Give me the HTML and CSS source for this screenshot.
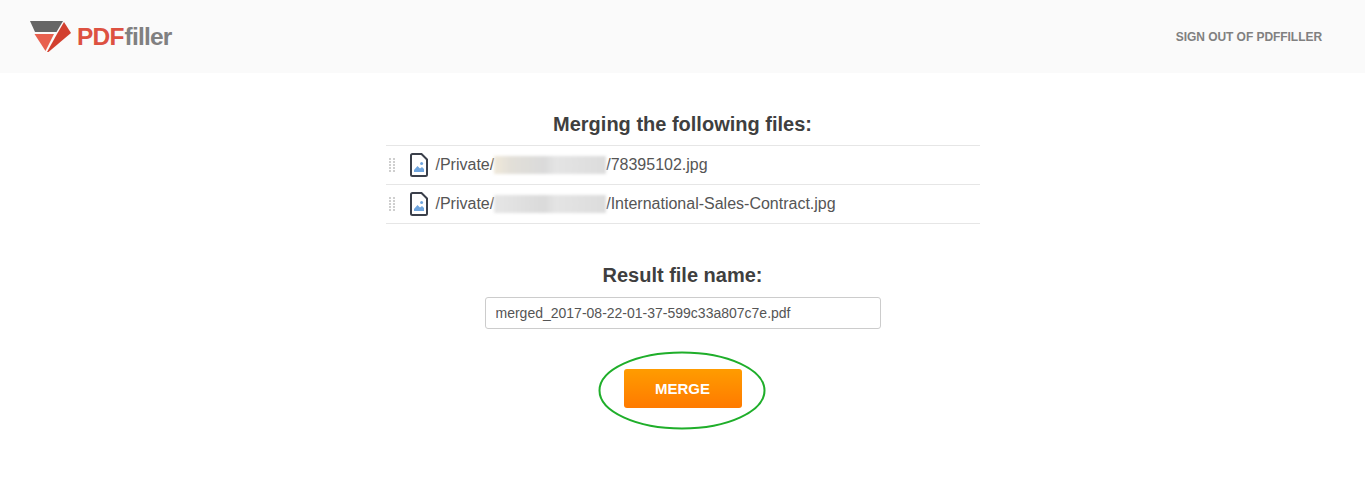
FILE: index.html
```html
<!DOCTYPE html>
<html lang="en">
<head>
<meta charset="utf-8">
<title>PDFfiller - Merge</title>
<link rel="stylesheet" href="styles.css">
</head>
<body>
<header class="topbar">
  <a class="logo" href="#">
    <svg class="logo-mark" width="42" height="32" viewBox="0 0 42 32">
      <polygon points="0,0 33,0 26.500,11 5,11" fill="#666"/>
      <polygon points="4.500,13 24,13 15.500,30" fill="#e8604f"/>
      <polygon points="34,1 41,12 18.500,31 17,31 27,13" fill="#d2402f"/>
    </svg>
    <span class="logo-text"><span class="logo-pdf">PDF</span><span class="logo-filler">filler</span></span>
  </a>
  <a class="signout" href="#">SIGN OUT OF PDFFILLER</a>
</header>
<main class="content">
  <h2 class="title">Merging the following files:</h2>
  <ul class="files">
    <li class="file">
      <svg class="grip" width="8" height="14" viewBox="0 0 8 14"><g fill="#cfcfcf"><rect x="0" y="0" width="2" height="2"/><rect x="4" y="0" width="2" height="2"/><rect x="0" y="3" width="2" height="2"/><rect x="4" y="3" width="2" height="2"/><rect x="0" y="6" width="2" height="2"/><rect x="4" y="6" width="2" height="2"/><rect x="0" y="9" width="2" height="2"/><rect x="4" y="9" width="2" height="2"/><rect x="0" y="12" width="2" height="2"/><rect x="4" y="12" width="2" height="2"/></g></svg>
      <svg class="file-icon" width="18" height="24" viewBox="0 0 18 24"><path d="M2.500 1H11.500L17 6.500V21.500a1.500 1.500 0 0 1-1.500 1.500H2.500A1.500 1.500 0 0 1 1 21.500V2.500A1.500 1.500 0 0 1 2.500 1Z" fill="#fff" stroke="#3a3f4a" stroke-width="2"/><path d="M4 19V17L7.500 13L10 15.500L12 14L14 16V19Z" fill="#6fa5de"/><circle cx="11.600" cy="10.500" r="1.500" fill="#6fa5de"/></svg>
      <span class="path">/Private/<span class="blur blur-warm"></span>/78395102.jpg</span>
    </li>
    <li class="file">
      <svg class="grip" width="8" height="14" viewBox="0 0 8 14"><g fill="#cfcfcf"><rect x="0" y="0" width="2" height="2"/><rect x="4" y="0" width="2" height="2"/><rect x="0" y="3" width="2" height="2"/><rect x="4" y="3" width="2" height="2"/><rect x="0" y="6" width="2" height="2"/><rect x="4" y="6" width="2" height="2"/><rect x="0" y="9" width="2" height="2"/><rect x="4" y="9" width="2" height="2"/><rect x="0" y="12" width="2" height="2"/><rect x="4" y="12" width="2" height="2"/></g></svg>
      <svg class="file-icon" width="18" height="24" viewBox="0 0 18 24"><path d="M2.500 1H11.500L17 6.500V21.500a1.500 1.500 0 0 1-1.500 1.500H2.500A1.500 1.500 0 0 1 1 21.500V2.500A1.500 1.500 0 0 1 2.500 1Z" fill="#fff" stroke="#3a3f4a" stroke-width="2"/><path d="M4 19V17L7.500 13L10 15.500L12 14L14 16V19Z" fill="#6fa5de"/><circle cx="11.600" cy="10.500" r="1.500" fill="#6fa5de"/></svg>
      <span class="path">/Private/<span class="blur"></span>/International-Sales-Contract.jpg</span>
    </li>
  </ul>
  <h2 class="title result-title">Result file name:</h2>
  <input class="name-input" type="text" value="merged_2017-08-22-01-37-599c33a807c7e.pdf">
  <div class="action">
    <button class="merge" type="button">MERGE</button>
    <svg class="ring" width="169" height="80" viewBox="0 0 169 80"><ellipse cx="84" cy="39.500" rx="82.500" ry="38" fill="none" stroke="#1fae2a" stroke-width="2"/></svg>
  </div>
</main>
</body>
</html>
```
FILE: styles.css
```css
* { box-sizing: border-box; }
html, body { margin: 0; padding: 0; }
body {
  background: #fff;
  font-family: "Liberation Sans", Arial, sans-serif;
  color: #555;
  min-height: 501px;
}
.topbar {
  height: 73px;
  background: #fafafa;
  display: flex;
  align-items: center;
  justify-content: space-between;
  padding: 0 43px 0 30px;
}
.logo {
  display: flex;
  align-items: center;
  gap: 5px;
  text-decoration: none;
}
.logo-mark { display: block; margin-top: 1px; }
.logo-text {
  font-size: 24.500px;
  font-weight: 700;
  letter-spacing: -0.8px;
  line-height: 30px;
}
.logo-pdf { color: #dd5141; }
.logo-filler { color: #808080; margin-left: 1px; }
.signout {
  font-size: 12px;
  font-weight: 700;
  color: #808080;
  letter-spacing: -0.05px;
  text-decoration: none;
}
.content {
  width: 594px;
  margin: 0 auto;
  padding: 39px 0 72px;
  display: flex;
  flex-direction: column;
  align-items: center;
}
.title {
  margin: 0;
  font-size: 20px;
  line-height: 24px;
  font-weight: 700;
  color: #3f3f3f;
  text-align: center;
}
.files {
  list-style: none;
  margin: 9px 0 0;
  padding: 0;
  width: 100%;
  border-top: 1px solid #e6e6e6;
}
.file {
  height: 39px;
  border-bottom: 1px solid #e6e6e6;
  display: flex;
  align-items: center;
  padding-left: 3px;
}
.grip { margin-right: 13px; flex: none; }
.file-icon { margin-right: 8px; flex: none; }
.path {
  font-size: 16px;
  color: #555;
  white-space: nowrap;
  display: flex;
  align-items: center;
}
.blur {
  display: inline-block;
  width: 112px;
  height: 18px;
  background: linear-gradient(90deg, #e6e6e6 0%, #dadada 45%, #e4e4e4 55%, #dcdcdc 100%);
  filter: blur(1.500px);
}
.blur-warm {
  background: linear-gradient(90deg, #f0e9da 0%, #e2dfd8 15%, #dadada 45%, #e4e4e4 55%, #dcdcdc 100%);
}
.result-title { margin-top: 39px; }
.name-input {
  margin-top: 10px;
  width: 396px;
  height: 32px;
  border: 1px solid #ccc;
  border-radius: 3px;
  padding: 0 10px;
  font: 14px "Liberation Sans", Arial, sans-serif;
  color: #555;
  background: #fff;
}
.action {
  position: relative;
  margin-top: 40px;
}
.merge {
  display: block;
  width: 118px;
  height: 39px;
  border: 0;
  border-radius: 3px;
  background: linear-gradient(180deg, #ff9c00 0%, #ff7a00 100%);
  color: #fff;
  font: 700 15px "Liberation Sans", Arial, sans-serif;
}
.ring {
  position: absolute;
  left: -26px;
  top: -18px;
  pointer-events: none;
}
```
